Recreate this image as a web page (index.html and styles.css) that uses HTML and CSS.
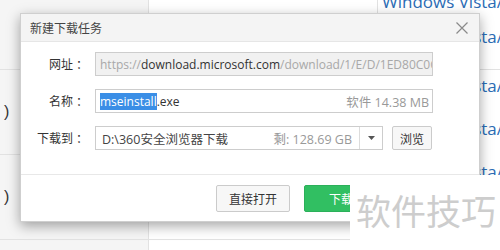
FILE: index.html
```html
<html>
    <head>
        <title>新建下载任务</title>
        <link rel="stylesheet" href="styles.css">
    </head>

    <body>
        <div class="page">
            <div class="col col-left">
                <div class="cell c1"></div>
                <div class="cell c2"><span class="paren">)</span></div>
                <div class="cell c2"><span class="paren">)</span></div>
            </div>
            <div class="col col-mid">
                <div class="cell c1"></div>
                <div class="cell c2"></div>
                <div class="cell c2"></div>
            </div>
            <div class="col col-right">
                <div class="cell c1">
                    <div class="links top">
                        <a>Windows Vista/Windows 7</a>
                        <a>Windows Vista/Windows 7</a>
                    </div>
                </div>
                <div class="cell plain">
                    <div class="links mid">
                        <a>Windows Vista/Windows 7</a>
                        <a>Windows Vista/Windows 7</a>
                        <a>Windows Vista/Windows 7</a>
                    </div>
                </div>
            </div>
        </div>

        <div class="dialog">
            <div class="dialog-title">
                <span>新建下载任务</span>
                <svg class="close" width="12" height="12" viewBox="0 0 12 12">
                    <path d="M0.5 0.5 L11.5 11.5 M11.5 0.5 L0.5 11.5" stroke="#8a8a8a" stroke-width="1.2" fill="none"/>
                </svg>
            </div>

            <div class="dialog-body">
                <div class="row">
                    <label class="label">网址 ：</label>
                    <div class="field disabled">
                        <span class="dim">https://</span><span>download.microsoft.com</span><span class="dim">/download/1/E/D/1ED80C0C</span>
                    </div>
                </div>
                <div class="row">
                    <label class="label">名称 ：</label>
                    <div class="field">
                        <span class="sel">mseinstall</span><span>.exe</span>
                        <span class="info">软件 14.38 MB</span>
                    </div>
                </div>
                <div class="row">
                    <label class="label">下载到 ：</label>
                    <div class="combo">
                        <span class="path">D:\360安全浏览器下载</span>
                        <span class="info">剩: 128.69 GB</span>
                        <span class="arrow">
                            <svg width="7" height="4" viewBox="0 0 7 4"><path d="M0 0 L7 0 L3.5 4 Z" fill="#555"/></svg>
                        </span>
                    </div>
                    <button class="btn small">浏览</button>
                </div>
            </div>

            <div class="dialog-foot">
                <button class="btn">直接打开</button>
                <button class="btn green">下载</button>
                <button class="btn">取消</button>
            </div>
        </div>

        <div class="mark">软件技巧</div>
    </body>
</html>
```

FILE: styles.css
```css
body {
    margin: 0;
    width: 500px;
    height: 250px;
    overflow: hidden;
    position: relative;
    font-family: "Open Sans", "Noto Sans CJK SC", sans-serif;
    background-color: white;
}

/* background page */
.page {
    display: flex;
    height: 250px;
}

.col {
    display: flex;
    flex-direction: column;
}

.col-left {
    width: 148px;
    background-color: #f5f5f5;
    border-right: 1px solid #e2e2e2;
}

.col-mid {
    width: 228px;
    border-right: 1px solid #e2e2e2;
}

.col-right {
    flex: 1;
    padding-left: 4px;
    overflow: hidden;
}

.cell {
    border-bottom: 1px solid #e2e2e2;
    flex-shrink: 0;
    overflow: hidden;
}

.c1 {
    height: 69px;
}

.c2 {
    height: 84px;
    display: flex;
    align-items: center;
}

.plain {
    border-bottom: none;
}

.paren {
    font-family: "Liberation Sans", sans-serif;
    font-size: 16px;
    color: #333;
    padding-left: 4px;
}

.links {
    display: flex;
    flex-direction: column;
    white-space: nowrap;
    font-size: 17px;
    color: #2b6cb5;
}

.links.top {
    margin-top: -16px;
    line-height: 35px;
}

.links.mid {
    margin-top: -6px;
    line-height: 43px;
}

/* dialog */
.dialog {
    position: absolute;
    left: 20px;
    top: 13px;
    width: 460px;
    height: 209px;
    box-sizing: border-box;
    background-color: white;
    border: 1px solid #cfcfcf;
    box-shadow: 0 4px 12px rgba(0, 0, 0, 0.35);
    display: flex;
    flex-direction: column;
}

.dialog-title {
    height: 27px;
    background-color: #f4f4f4;
    border-bottom: 1px solid #e6e6e6;
    display: flex;
    align-items: center;
    justify-content: space-between;
    padding: 0 11px 0 9px;
    font-size: 12px;
    color: #444;
}

.dialog-body {
    height: 133px;
    box-sizing: border-box;
    padding-top: 10px;
    border-bottom: 1px solid #e8e8e8;
    display: flex;
    flex-direction: column;
    gap: 13px;
}

.row {
    display: flex;
    align-items: center;
    height: 24px;
}

.label {
    width: 67px;
    margin-right: 7px;
    text-align: right;
    font-size: 12px;
    color: #333;
    white-space: nowrap;
}

.field {
    width: 338px;
    height: 24px;
    box-sizing: border-box;
    border: 1px solid #cdcdcd;
    display: flex;
    align-items: center;
    padding: 0 3px 0 4px;
    font-size: 12px;
    color: #333;
    white-space: nowrap;
    overflow: hidden;
}

.disabled {
    background-color: #f1f1f1;
}

.dim {
    color: #a8a8a8;
}

.sel {
    background-color: #3a8ee6;
    color: white;
    line-height: 17px;
}

.info {
    margin-left: auto;
    color: #999;
    font-size: 12.5px;
}

.combo {
    width: 288px;
    height: 24px;
    box-sizing: border-box;
    border: 1px solid #cdcdcd;
    display: flex;
    align-items: center;
    padding-left: 6px;
    font-size: 12.5px;
    color: #444;
    white-space: nowrap;
}

.combo .info {
    margin-right: 7px;
}

.arrow {
    width: 22px;
    height: 22px;
    border-left: 1px solid #dcdcdc;
    display: flex;
    align-items: center;
    justify-content: center;
}

.btn {
    font-family: "Noto Sans CJK SC", sans-serif;
    font-size: 12px;
    color: #333;
    background-color: #f7f7f7;
    border: 1px solid #cbcbcb;
    border-radius: 2px;
    padding: 0;
}

.btn.small {
    width: 40px;
    height: 24px;
    margin-left: 9px;
}

.dialog-foot {
    flex: 1;
    display: flex;
    align-items: center;
    justify-content: flex-end;
    gap: 14px;
    padding-right: 13px;
}

.dialog-foot .btn {
    width: 74px;
    height: 27px;
}

.btn.green {
    background-color: #31bf62;
    border-color: #2bb05a;
    color: white;
}

/* watermark */
.mark {
    position: absolute;
    left: 350px;
    top: 175px;
    width: 150px;
    height: 75px;
    background-color: white;
    color: #cdcdcd;
    font-family: "Noto Sans CJK SC", sans-serif;
    font-size: 35px;
    line-height: 70px;
    padding-left: 6px;
    box-sizing: border-box;
}
```
